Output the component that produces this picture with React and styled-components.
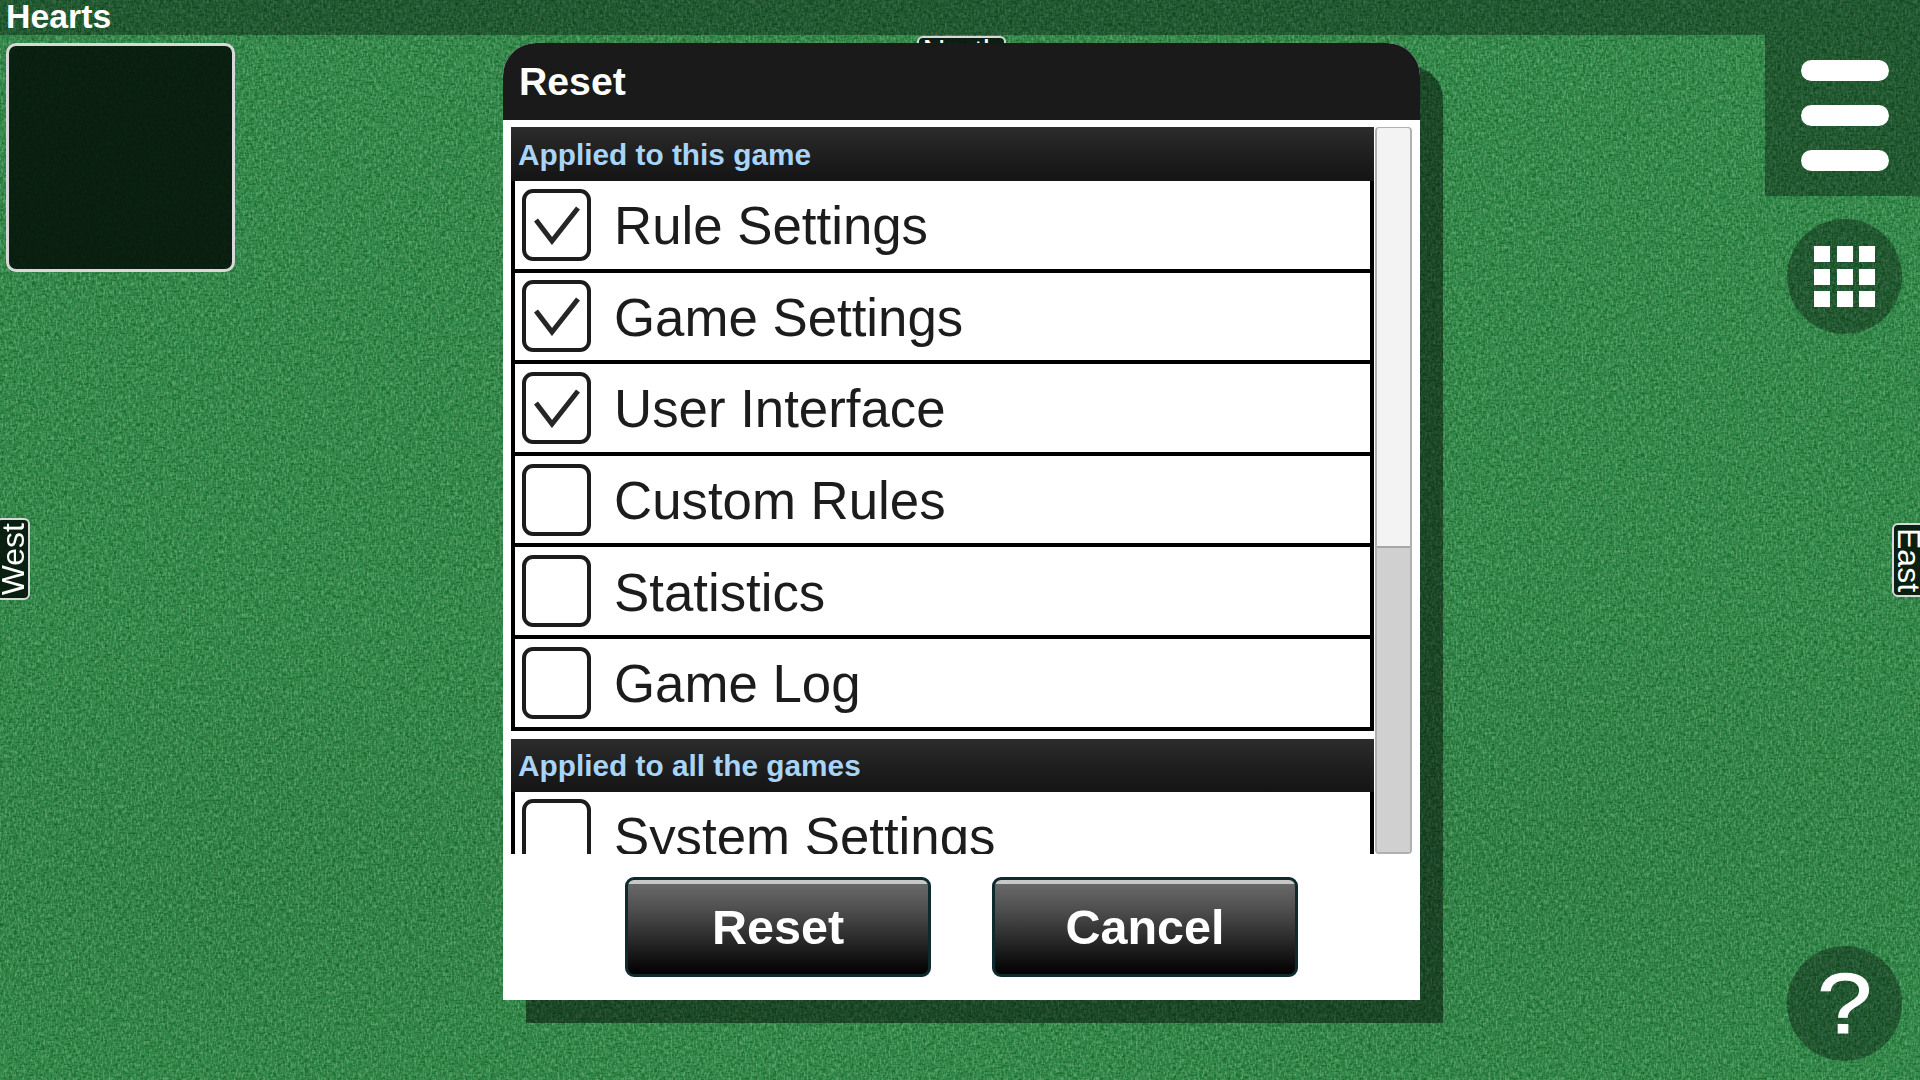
import React from "react";
import styled, { createGlobalStyle } from "styled-components";

const Global = createGlobalStyle`
  html, body { margin: 0; padding: 0; background: #2f8546; }
  * { box-sizing: border-box; }
`;

const Page = styled.div`
  position: relative;
  width: 1920px;
  height: 1080px;
  overflow: hidden;
  display: flex;
  flex-direction: column;
  font-family: "Liberation Sans", Arial, sans-serif;
  background:
    radial-gradient(1000px 420px at 1500px 860px, rgba(0,0,0,.06), transparent 72%),
    radial-gradient(800px 380px at 250px 880px, rgba(0,0,0,.05), transparent 72%),
    #31894b;
`;

const Cloth = styled.svg`
  position: absolute;
  inset: 0;
  width: 1920px;
  height: 1080px;
`;

const TopBar = styled.header`
  position: relative;
  height: 35px;
  flex: none;
  background: rgba(0, 0, 0, .34);
  color: #fff;
  font-size: 33.8px;
  font-weight: 700;
  line-height: 33px;
  padding-left: 6px;
  overflow: hidden;
`;

const Table = styled.main`
  position: relative;
  flex: 1;
  display: flex;
  justify-content: space-between;
`;

const ScorePanel = styled.div`
  margin: 8px 0 0 6px;
  width: 229px;
  height: 229px;
  border: 3px solid #d8d8d8;
  border-radius: 10px;
  background: rgba(6, 20, 10, .9);
`;

const Rail = styled.aside`
  width: 155px;
  display: flex;
  flex-direction: column;
  align-items: flex-end;
  padding-bottom: 19px;
`;

const MenuBlock = styled.div`
  width: 155px;
  height: 161px;
  padding: 25px 31px 0 36px;
  background: rgba(0, 0, 0, .34);
  display: flex;
  flex-direction: column;
  gap: 24px;
`;

const MenuBar = styled.span`
  display: block;
  height: 21px;
  border-radius: 10.5px;
  background: #fff;
`;

const RoundButton = styled.div`
  width: 115px;
  height: 115px;
  margin-right: 18px;
  border-radius: 50%;
  background: rgba(0, 0, 0, .34);
  display: flex;
  align-items: center;
  justify-content: center;
  color: #fff;
`;

const GridButton = styled(RoundButton)`
  margin-top: 23px;
`;

const HelpButton = styled(RoundButton)`
  margin-top: auto;
  font-size: 85px;
  line-height: 1;
  font-weight: 400;
`;

const HelpMark = styled.span`
  display: block;
  transform: scaleX(1.16);
  -webkit-text-stroke: 1px #fff;
`;

const Dots = styled.div`
  display: grid;
  grid-template-columns: repeat(3, 16px);
  grid-auto-rows: 16px;
  gap: 6.3px;
`;

const Dot = styled.span`
  background: #fff;
`;

const Seat = styled.div`
  position: absolute;
  border: 2px solid #d8d8d8;
  background: rgba(6, 20, 10, .9);
  color: #fff;
  font-size: 32px;
  line-height: 1;
  display: flex;
  align-items: center;
  justify-content: center;
  overflow: hidden;
`;

const West = styled(Seat)`
  left: -4px;
  top: 518px;
  width: 34px;
  height: 82px;
  border-radius: 6px;
  writing-mode: vertical-rl;
  & > span { transform: rotate(180deg); }
`;

const East = styled(Seat)`
  left: 1892px;
  top: 523px;
  width: 34px;
  height: 74px;
  border-radius: 6px;
  writing-mode: vertical-rl;
`;

const North = styled(Seat)`
  left: 917px;
  top: 36px;
  width: 89px;
  height: 34px;
  border-radius: 6px;
  align-items: flex-start;
  line-height: .85;
`;

const Modal = styled.section`
  position: absolute;
  left: 503px;
  top: 43px;
  width: 917px;
  height: 957px;
  background: #fff;
  border-radius: 33px 33px 0 0;
  box-shadow: 23px 23px 0 rgba(0, 0, 0, .46);
  display: flex;
  flex-direction: column;
`;

const ModalTitle = styled.h1`
  margin: 0;
  height: 77px;
  flex: none;
  background: #1a1a1a;
  border-radius: 33px 33px 0 0;
  color: #fff;
  font-size: 39.2px;
  font-weight: 700;
  line-height: 78px;
  padding-left: 16px;
`;

const Body = styled.div`
  height: 727px;
  margin-top: 7px;
  flex: none;
  padding-left: 8px;
  display: flex;
`;

const List = styled.div`
  width: 863px;
  height: 100%;
  overflow: hidden;
  flex: none;
`;

const SectionHead = styled.div`
  height: ${(p) => p.$h}px;
  margin-top: ${(p) => p.$top}px;
  padding: 2px 0 0 7px;
  background: linear-gradient(#2c2c2c, #1f1f1f 50%, #141414);
  color: #a8d4f8;
  font-size: 29.8px;
  font-weight: 700;
  display: flex;
  align-items: center;
`;

const Row = styled.div`
  height: 91.6px;
  border-left: 4px solid #000;
  border-right: 4px solid #000;
  border-bottom: 4px solid #000;
  background: #fff;
  display: flex;
  align-items: center;
  padding-left: 7px;
  color: #1c1c1c;
  font-size: 52.8px;
`;

const Box = styled.span`
  width: 69px;
  height: 72px;
  flex: none;
  border: 4px solid #1c1c1c;
  border-radius: 11px;
  display: flex;
  align-items: center;
  justify-content: center;
  margin-right: 23px;
`;

const Label = styled.span`
  margin-top: 2px;
`;

const Scrollbar = styled.div`
  width: 37px;
  height: 100%;
  margin: 0 0 0 1px;
  flex: none;
  border: 2px solid #b0b0b0;
  border-top-width: 1px;
  border-radius: 4px;
  background: #f3f3f3;
  display: flex;
  flex-direction: column;
  justify-content: flex-end;
`;

const Thumb = styled.div`
  height: 306px;
  background: #d0d0d0;
  border-top: 2px solid #a6a6a6;
`;

const Actions = styled.div`
  flex: 1;
  display: flex;
  justify-content: center;
  gap: 61px;
  padding-top: 23px;
`;

const Action = styled.button`
  width: 306px;
  height: 100px;
  padding: 0;
  border: 3px solid #0f2a2c;
  border-radius: 9px;
  background: linear-gradient(#c8c8c8 0, #c8c8c8 4px, #686868 4px, #505050 30%, #222 70%, #000);
  color: #fff;
  font-family: inherit;
  font-size: 48.5px;
  font-weight: 700;
`;

const Check = () => (
  <svg width="46" height="40" viewBox="0 0 46 40">
    <path d="M2 15 L18 36 L44 3" fill="none" stroke="#262626" strokeWidth="5" />
  </svg>
);

const rows = [
  ["Rule Settings", true],
  ["Game Settings", true],
  ["User Interface", true],
  ["Custom Rules", false],
  ["Statistics", false],
  ["Game Log", false],
];

export default function App() {
  return (
    <Page>
      <Global />
      <Cloth aria-hidden="true">
        <filter id="warp" x="0" y="0" width="100%" height="100%">
          <feTurbulence type="fractalNoise" baseFrequency="0.22 0.55" numOctaves="2" seed="4" />
          <feColorMatrix values="0 0 0 0 0  0 0 0 0 .05  0 0 0 0 0  3 0 0 0 -1.25" />
        </filter>
        <filter id="weft" x="0" y="0" width="100%" height="100%">
          <feTurbulence type="fractalNoise" baseFrequency="0.55 0.22" numOctaves="2" seed="11" />
          <feColorMatrix values="0 0 0 0 .5  0 0 0 0 .8  0 0 0 0 .55  0 3 0 0 -1.3" />
        </filter>
        <rect width="1920" height="1080" filter="url(#warp)" opacity=".42" />
        <rect width="1920" height="1080" filter="url(#weft)" opacity=".3" />
      </Cloth>
      <TopBar>Hearts</TopBar>
      <Table>
        <ScorePanel />
        <Rail>
          <MenuBlock>
            <MenuBar />
            <MenuBar />
            <MenuBar />
          </MenuBlock>
          <GridButton>
            <Dots>
              {Array.from({ length: 9 }, (_, i) => (
                <Dot key={i} />
              ))}
            </Dots>
          </GridButton>
          <HelpButton>
            <HelpMark>?</HelpMark>
          </HelpButton>
        </Rail>
      </Table>
      <West><span>West</span></West>
      <East><span>East</span></East>
      <North>North</North>
      <Modal>
        <ModalTitle>Reset</ModalTitle>
        <Body>
          <List>
            <SectionHead $h={54} $top={0}>Applied to this game</SectionHead>
            {rows.map(([label, on]) => (
              <Row key={label}>
                <Box>{on && <Check />}</Box>
                <Label>{label}</Label>
              </Row>
            ))}
            <SectionHead $h={53} $top={8}>Applied to all the games</SectionHead>
            <Row>
              <Box />
              <Label>System Settings</Label>
            </Row>
          </List>
          <Scrollbar>
            <Thumb />
          </Scrollbar>
        </Body>
        <Actions>
          <Action>Reset</Action>
          <Action>Cancel</Action>
        </Actions>
      </Modal>
    </Page>
  );
}
